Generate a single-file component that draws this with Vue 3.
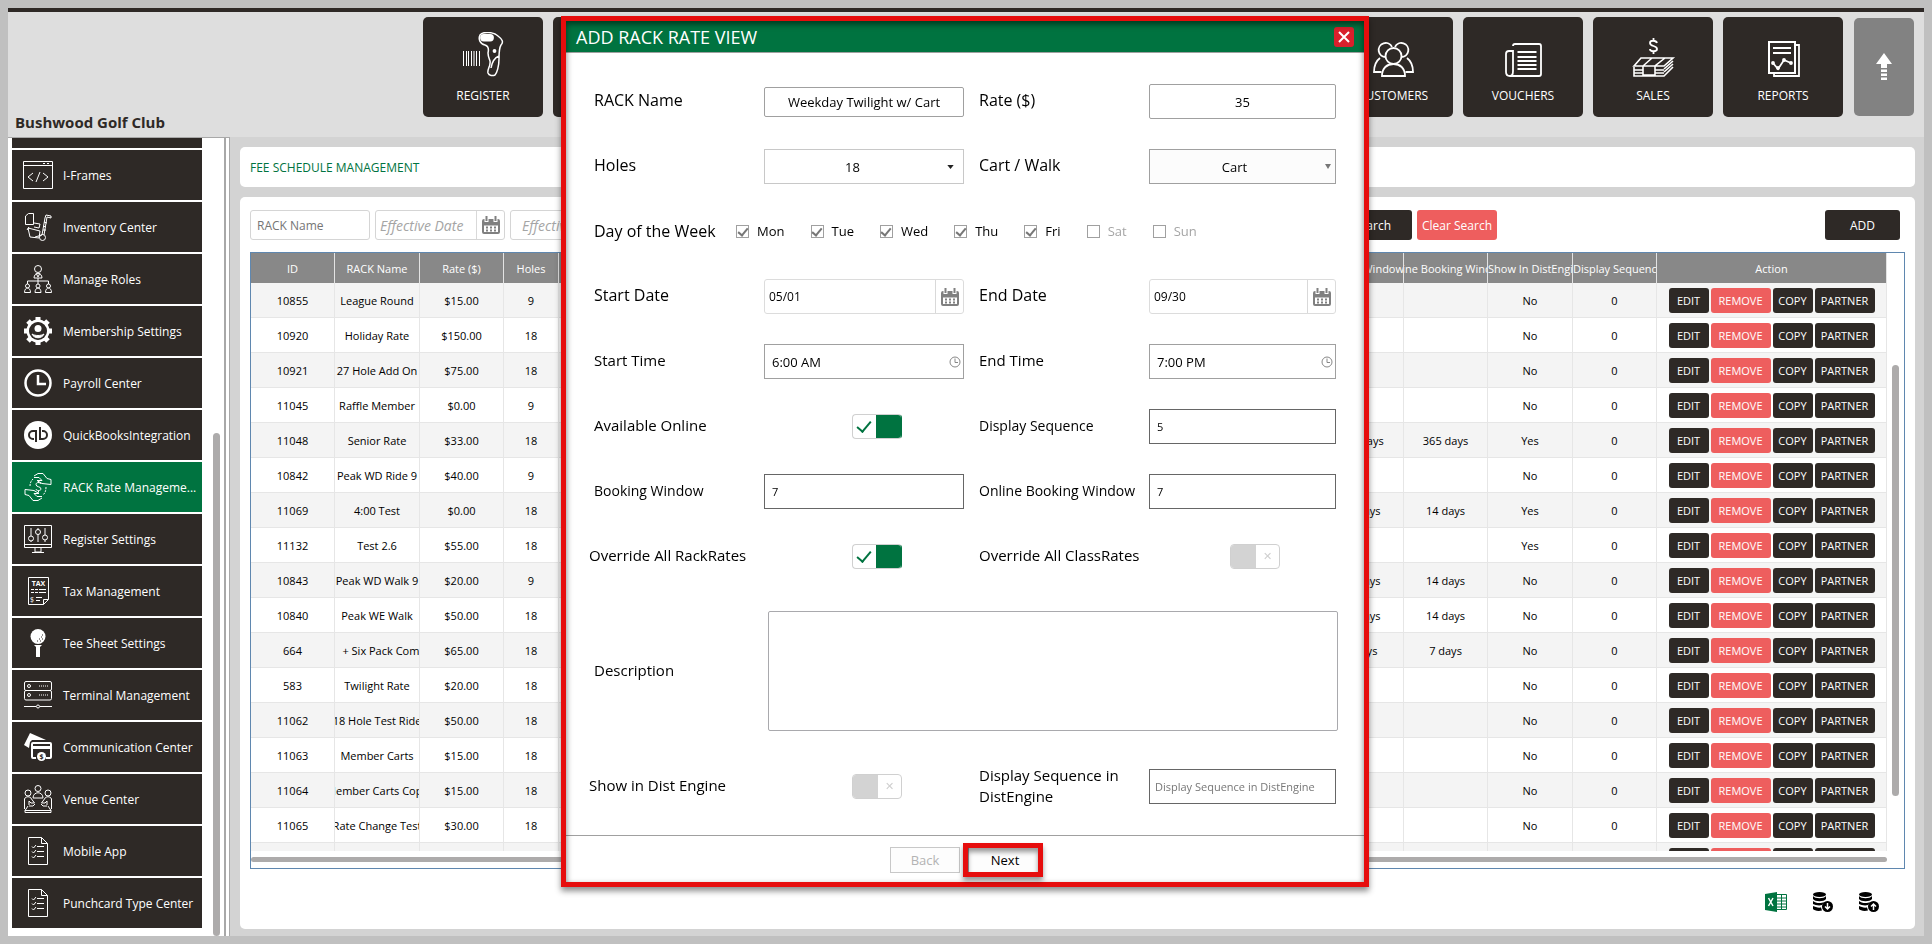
<template>
  <div class="page">
    <header class="header">
      <h1 class="club">Bushwood Golf Club</h1>
      <nav class="tiles">
        <a v-for="(tile, i) in tiles" :key="i" href="#" class="tile">
          <svg class="tile-icon" viewBox="0 0 45 45" v-html="tile.icon"></svg>
          <span>{{ tile.label }}</span>
        </a>
        <button class="tile-up" aria-label="Collapse menu">
          <svg viewBox="0 0 16 28" width="16" height="28" fill="#fff">
            <path d="M8 0L16 11H11V15H5V11H0zM5 16.500h6v2.500H5zM5 20.500h6v2.500H5zM5 24.500h6v2.500H5z" />
          </svg>
        </button>
      </nav>
    </header>

    <div class="body">
      <aside class="sidebar">
        <nav class="menu">
          <a
            v-for="item in menu"
            :key="item.label"
            href="#"
            class="menu-item"
            :class="{ active: item.active }"
          >
            <svg class="menu-icon" viewBox="0 0 28 28" v-html="item.icon"></svg>
            <span>{{ item.label }}</span>
          </a>
        </nav>
        <div class="menu-scroll"><div class="menu-thumb"></div></div>
      </aside>

      <main class="content">
        <section class="card card-title">FEE SCHEDULE MANAGEMENT</section>

        <section class="card card-main">
          <div class="filters">
            <input class="filter-input" type="text" placeholder="RACK Name" aria-label="RACK Name" />
            <div class="filter-date">
              <input type="text" placeholder="Effective Date" aria-label="Effective Date" />
              <button class="cal-btn" aria-label="Pick effective date">
                <svg viewBox="0 0 18 18" v-html="calendar"></svg>
              </button>
            </div>
            <div class="filter-date filter-until">
              <input type="text" placeholder="Effective Until" aria-label="Effective Until" />
            </div>
            <div class="spacer"></div>
            <button class="btn btn-search">Search</button>
            <button class="btn btn-red btn-clear">Clear Search</button>
            <button class="btn btn-add">ADD</button>
          </div>

          <div class="grid">
            <div class="grid-main">
              <div class="grid-view">
                <table>
                  <colgroup>
                    <col class="c-id" />
                    <col class="c-name" />
                    <col class="c-id" />
                    <col class="c-holes" />
                    <col />
                    <col class="c-window" />
                    <col class="c-online" />
                    <col class="c-show" />
                    <col class="c-seq" />
                    <col class="c-action" />
                  </colgroup>
                  <thead>
                    <tr>
                      <th>ID</th>
                      <th>RACK Name</th>
                      <th>Rate ($)</th>
                      <th>Holes</th>
                      <th></th>
                      <th><div class="clip">Booking Window</div></th>
                      <th><div class="clip">Online Booking Window</div></th>
                      <th class="start">Show In DistEngine</th>
                      <th class="start">Display Sequence</th>
                      <th>Action</th>
                    </tr>
                  </thead>
                  <tbody>
                    <tr v-for="row in rows" :key="row[0]">
                      <td>{{ row[0] }}</td>
                      <td><div class="clip">{{ row[1] }}</div></td>
                      <td>{{ row[2] }}</td>
                      <td>{{ row[3] }}</td>
                      <td></td>
                      <td>{{ row[4] }}</td>
                      <td>{{ row[4] }}</td>
                      <td>{{ row[5] }}</td>
                      <td>0</td>
                      <td>
                        <div class="actions">
                          <button class="act">EDIT</button>
                          <button class="act act-wide btn-red">REMOVE</button>
                          <button class="act">COPY</button>
                          <button class="act act-wide">PARTNER</button>
                        </div>
                      </td>
                    </tr>
                  </tbody>
                </table>
              </div>
              <div class="h-thumb"></div>
            </div>
            <div class="v-track"><div class="v-thumb"></div></div>
          </div>

          <div class="exports">
            <button aria-label="Export to Excel">
              <svg viewBox="0 0 22 20" width="22" height="20">
                <path d="M11 2.500h10.500v15H11z" fill="#fff" stroke="#007340" />
                <path d="M12 6h9M12 9h9M12 12h9M12 15h9M16.500 3v14" stroke="#007340" />
                <path d="M0 2L12 0V20L0 18z" fill="#007340" />
                <path d="M3.500 6l4.500 8M8 6l-4.500 8" stroke="#fff" stroke-width="1.500" />
              </svg>
            </button>
            <button aria-label="Download data">
              <svg viewBox="0 0 20 20" width="20" height="20">
                <g v-html="database"></g>
                <path d="M14.500 11v6M12 14.500l2.500 2.500 2.500-2.500" fill="none" stroke="#fff" stroke-width="1.500" />
              </svg>
            </button>
            <button aria-label="Upload data">
              <svg viewBox="0 0 20 20" width="20" height="20">
                <g v-html="database"></g>
                <path d="M14.500 18v-6M12 14.500l2.500-2.500 2.500 2.500" fill="none" stroke="#fff" stroke-width="1.500" />
              </svg>
            </button>
          </div>
        </section>
      </main>
    </div>

    <div v-if="visible" class="overlay">
      <div class="modal" role="dialog" aria-labelledby="modal-title">
        <div class="modal-head">
          <h2 id="modal-title">ADD RACK RATE VIEW</h2>
          <button class="modal-close" aria-label="Close" @click="visible = false">
            <svg viewBox="0 0 12 12" width="12" height="12">
              <path d="M1 1l10 10M11 1L1 11" stroke="#fff" stroke-width="2" />
            </svg>
          </button>
        </div>

        <form class="form" @submit.prevent>
          <label for="name">RACK Name</label>
          <input id="name" v-model="form.name" type="text" class="field field-short center" />
          <label for="rate" class="second">Rate ($)</label>
          <input id="rate" v-model="form.rate" type="text" class="field center rounded" />

          <label for="holes">Holes</label>
          <div class="select">
            <select id="holes" v-model="form.holes" class="field light">
              <option>9</option>
              <option>18</option>
            </select>
            <svg viewBox="0 0 8 5" width="7" height="4"><path d="M0 0h8L4 5z" fill="#222" /></svg>
          </div>
          <label for="cart" class="second">Cart / Walk</label>
          <div class="select select-cart">
            <select id="cart" v-model="form.cart" class="field">
              <option>Cart</option>
              <option>Walk</option>
            </select>
            <svg viewBox="0 0 6 5" width="6" height="5"><path d="M0 0h6L3 5z" fill="#777" /></svg>
          </div>

          <fieldset class="days">
            <legend class="sr-only">Day of the Week</legend>
            <span class="days-title">Day of the Week</span>
            <label v-for="day in form.days" :key="day.name" class="day" :class="{ off: !day.on }">
              <input v-model="day.on" type="checkbox" />{{ day.name }}
            </label>
          </fieldset>

          <label for="start-date">Start Date</label>
          <div class="date">
            <input id="start-date" v-model="form.startDate" type="text" />
            <button type="button" class="cal-btn" aria-label="Pick start date">
              <svg viewBox="0 0 18 18" v-html="calendar"></svg>
            </button>
          </div>
          <label for="end-date" class="second">End Date</label>
          <div class="date">
            <input id="end-date" v-model="form.endDate" type="text" />
            <button type="button" class="cal-btn" aria-label="Pick end date">
              <svg viewBox="0 0 18 18" v-html="calendar"></svg>
            </button>
          </div>

          <label for="start-time" class="medium">Start Time</label>
          <div class="select time">
            <input id="start-time" v-model="form.startTime" type="text" class="field" />
            <svg viewBox="0 0 12 12" width="12" height="12" v-html="clock"></svg>
          </div>
          <label for="end-time" class="second medium">End Time</label>
          <div class="select time">
            <input id="end-time" v-model="form.endTime" type="text" class="field" />
            <svg viewBox="0 0 12 12" width="12" height="12" v-html="clock"></svg>
          </div>

          <label for="online" class="medium">Available Online</label>
          <input id="online" v-model="form.online" type="checkbox" class="toggle" />
          <label for="sequence" class="second small">Display Sequence</label>
          <input id="sequence" v-model="form.sequence" type="text" class="field dark" />

          <label for="booking" class="small">Booking Window</label>
          <input id="booking" v-model="form.booking" type="text" class="field dark" />
          <label for="online-booking" class="second small">Online Booking Window</label>
          <input id="online-booking" v-model="form.onlineBooking" type="text" class="field dark" />

          <label for="override-rack" class="medium outdent">Override All RackRates</label>
          <input id="override-rack" v-model="form.overrideRack" type="checkbox" class="toggle" />
          <label for="override-class" class="second medium">Override All ClassRates</label>
          <input id="override-class" v-model="form.overrideClass" type="checkbox" class="toggle" />

          <label for="description" class="medium">Description</label>
          <textarea id="description" v-model="form.description"></textarea>

          <label for="show-dist" class="medium outdent">Show in Dist Engine</label>
          <input id="show-dist" v-model="form.showDist" type="checkbox" class="toggle" />
          <label for="dist-sequence" class="second medium">Display Sequence in DistEngine</label>
          <input
            id="dist-sequence"
            v-model="form.distSequence"
            type="text"
            class="field dark"
            placeholder="Display Sequence in DistEngine"
          />
        </form>

        <div class="modal-foot">
          <button class="step" disabled>Back</button>
          <div class="highlight"><button class="step">Next</button></div>
        </div>
      </div>
    </div>
  </div>
</template>

<script setup>
import { ref } from 'vue';

const visible = ref(true);

const form = ref({
  name: 'Weekday Twilight w/ Cart',
  rate: '35',
  holes: '18',
  cart: 'Cart',
  days: [
    { name: 'Mon', on: true },
    { name: 'Tue', on: true },
    { name: 'Wed', on: true },
    { name: 'Thu', on: true },
    { name: 'Fri', on: true },
    { name: 'Sat', on: false },
    { name: 'Sun', on: false }
  ],
  startDate: '05/01',
  endDate: '09/30',
  startTime: '6:00 AM',
  endTime: '7:00 PM',
  online: true,
  sequence: '5',
  booking: '7',
  onlineBooking: '7',
  overrideRack: true,
  overrideClass: false,
  description: '',
  showDist: false,
  distSequence: ''
});

const blank = { label: '', icon: '' };

const tiles = [
  {
    label: 'REGISTER',
    icon: '<path d="M2.500 19v15M5.500 19v15M7.500 19v15M10.500 19v15M13 19v15M15.500 19v15M18.500 19v15" stroke-width="1"/><path d="M19 3C22-1 33 0 37 4c4 3 6 6 3 9-2 3-2 8-2 14 0 7-2 14-4 16-2 1-6 1-7-2-1-4 3-7 2-12-1-3-2-5-2-8 1-4 0-7-3-8-5-1-7-6-5-10zM38 24c-5 2-7 6-8 12" stroke-width="1.500"/><rect x="20" y="3" width="12" height="5.500" rx="2.700" fill="#fff"/><circle cx="33.500" cy="19" r="1" fill="#fff"/>'
  },
  blank, blank, blank, blank, blank, blank,
  {
    label: 'CUSTOMERS',
    icon: '<circle cx="22.500" cy="24" r="8"/><path d="M11 44c0-8 5-12 11.500-12S34 36 34 44z"/><path d="M15 25a7 7 0 1 1 6-10M30 25a7 7 0 1 0-6-10M10.500 40H3c0-7 2-11 6-14M34.500 40H42c0-7-2-11-6-14"/>'
  },
  {
    label: 'VOUCHERS',
    icon: '<path d="M12 14a2 2 0 0 1 2-2h24a2 2 0 0 1 2 2v28a2 2 0 0 1-2 2H9c-3 0-4-2-4-4V22c0-2 1-3 3-3h4v20c0 3-1 5-3 5M16.500 20h19M16.500 25h19M16.500 29h19M16.500 33h19M16.500 37h19"/>'
  },
  {
    label: 'SALES',
    icon: '<path d="M26 11c-1-3-7-3-7 0 0 4 7 2 7 6 0 3-7 3-7 0M22.500 6v3M22.500 19v3"/><path d="M10 26h32l-9 8H3zM3 35v9h30l9-9M3 38h9M3 41h9M12 34v9h12v-9l10-8M12 34l9-8M33 37l9-8M33 40l9-8M24 38h9M24 41h9" stroke-width="1.600"/>'
  },
  {
    label: 'REPORTS',
    icon: '<path d="M8 10h26v31H8z" stroke-width="2"/><path d="M35 13h3v31H13v-3M12 16h18M12 21h18M12 31l5 6 6-9 7 3"/><circle cx="12" cy="31" r="1"/><circle cx="17" cy="36" r="1"/><circle cx="23" cy="28" r="1"/><circle cx="30" cy="31" r="1"/>'
  }
];

const checklist =
  '<path d="M4.500 .500h13l6 6v21h-19zM17.500 .500v6h6M13 9.500h7M13 14.500h7M13 19.500h7M8 9.500l1.500 1.500 2.500-3M8 14.500l1.500 1.500 2.500-3M8 19.500l1.500 1.500 2.500-3"/>';

const menu = [
  { label: '', icon: '' },
  {
    label: 'I-Frames',
    icon: '<path d="M-.500 .500h29v27H-.500zM-.500 4.500h29M19 2.500h2M23 2.500h2"/><path d="M9 12l-5 4 5 4M19 12l5 4-5 4M16 11l-4 10"/>'
  },
  {
    label: 'Inventory Center',
    icon: '<path d="M1.500 3l3-2.500h5v11h-8zM10 10l6 1-1 4-5-1M27 3l-5-1-1 3-3 17M27 3v2l-4-1-3 18M4 15l12 3-1 7-9-1zM3 17l2-3M18 22l-7 2"/><circle cx="18.500" cy="24.500" r="3"/><path d="M20 9l3 1M19 13l3 1M19 17h3"/>'
  },
  {
    label: 'Manage Roles',
    icon: '<circle cx="14" cy="4" r="3.500"/><path d="M10 13c0-6 8-6 8 0zM12 8l2 4 2-4M14 13v6M3.500 19v-3h21v3"/><circle cx="3.500" cy="21" r="2"/><circle cx="14" cy="21" r="2"/><circle cx="24.500" cy="21" r="2"/><path d="M.500 27.500c0-6 6-6 6 0zM11 27.500c0-6 6-6 6 0zM21.500 27.500c0-6 6-6 6 0z"/>'
  },
  {
    label: 'Membership Settings',
    icon: '<circle cx="14" cy="14" r="10" stroke-width="3"/><path d="M14 0v5M14 23v5M0 14h5M23 14h5M4 4l4 4M20 20l4 4M4 24l4-4M20 8l4-4" stroke-width="5"/><circle cx="14" cy="14" r="9" fill="#2e2926" stroke="none"/><circle cx="14" cy="11.500" r="3.500" fill="#fff" stroke="none"/><path d="M8 17c2 5 10 5 12 0-3 2-9 2-12 0z" fill="#fff"/>'
  },
  { label: 'Payroll Center', icon: '<circle cx="14" cy="14" r="12.500" stroke-width="2.500"/><path d="M14 6v9h8" stroke-width="2.500"/>' },
  {
    label: 'QuickBooksIntegration',
    icon: '<circle cx="14" cy="14" r="14" fill="#fff" stroke="none"/><g stroke="#2e2926" stroke-width="2"><path d="M12 21V10H9a4 4 0 0 0 0 8h1M16 6v12h3a4 4 0 0 0 0-8h-1"/></g>'
  },
  {
    label: 'RACK Rate Manageme...',
    active: true,
    icon: '<path d="M10 3l4-2.500h5l4 5 4 1v5l-9-1-5-3h5l-3-3h-5M18 25l-4 2.500H9l-4-5-4-1v-5l9 1 5 3h-5l3 3h5"/><path d="M6 13c0-3 1-5 3-7M22 14c0 4-1 6-3 8" stroke-dasharray="2 1"/><path d="M17 11c-1-2-5-2-5 .500 0 3 5 1.500 5 4.500 0 2-5 2-5 0M14.500 8v2M14.500 17.500v2"/>'
  },
  {
    label: 'Register Settings',
    icon: '<path d="M.500 .500h27v22H.500zM.500 19.500h27M11 23v4h6v-4M8 27.500h12M7 3v8M7 16v1M14 3v2M14 9v8M21 3v7M21 15v2"/><circle cx="7" cy="13.500" r="2.500"/><circle cx="14" cy="7" r="2.500"/><circle cx="21" cy="12.500" r="2.500"/>'
  },
  {
    label: 'Tax Management',
    icon: '<path d="M4.500 .500h20v22l-5 5h-15zM19.500 27.500v-5h5"/><text x="14.500" y="9" text-anchor="middle" font-size="7" font-weight="700" fill="#fff" stroke="none">TAX</text><path d="M7 12.500h3M11 12.500h3M15 12.500h7M7 15.500h3M11 15.500h3M15 15.500h7M12 20.500h6M12 23.500h4"/><text x="6" y="25" font-size="7" fill="#fff" stroke="none">$</text>'
  },
  {
    label: 'Tee Sheet Settings',
    icon: '<circle cx="14" cy="7.500" r="7.500" fill="#fff" stroke="none"/><path d="M10 16h8l-2 2v10h-4V18z" fill="#fff" stroke="none"/><path d="M13 12h1M16 12h1M15 10h1M18 10h1M17 8h1M18 6h1" stroke="#2e2926"/>'
  },
  {
    label: 'Terminal Management',
    icon: '<rect x=".500" y=".500" width="27" height="9" rx="1.500"/><rect x=".500" y="9.500" width="27" height="9.500" rx="1.500"/><circle cx="5" cy="5" r="1.500"/><circle cx="5" cy="14" r="1.500"/><path d="M15 5h10M15 14h10" stroke-dasharray="1 1"/><path d="M0 25.500h12M16 25.500h12"/><circle cx="14" cy="25.500" r="1.500"/>'
  },
  {
    label: 'Communication Center',
    icon: '<path d="M6 0l16 7H8L6 9 5 15 0 12z" fill="#fff" stroke="none"/><path d="M7 11a2 2 0 0 1 2-2h17a2 2 0 0 1 2 2v13a2 2 0 0 1-2 2h-4v-2h4v-8H9v8h3v2H9a2 2 0 0 1-2-2zM9 11v2h17v-2z" fill="#fff" fill-rule="evenodd" stroke="none"/><circle cx="17.500" cy="23.500" r="4.500" fill="#fff" stroke="none"/><text x="17.500" y="26" text-anchor="middle" font-size="7" font-weight="700" fill="#2e2926" stroke="none">$</text>'
  },
  {
    label: 'Venue Center',
    icon: '<circle cx="14" cy="3.500" r="3"/><circle cx="4" cy="8" r="3"/><circle cx="24" cy="8" r="3"/><path d="M9 13c0-7 10-7 10 0zM.500 24V14c1-3 6-3 7 0l3 4H7l-2-2v4M27.500 24V14c-1-3-6-3-7 0l-3 4H21l2-2v4M5 21h4l2-2M23 21h-4l-2-2M4 21L1 25.500h26L24 21M1 25.500v2h26v-2"/>'
  },
  { label: 'Mobile App', icon: checklist },
  { label: 'Punchcard Type Center', icon: checklist }
];

const calendar =
  '<path d="M0 5a2 2 0 0 1 2-2h.500v3h4V3h5v3h4V3h.500a2 2 0 0 1 2 2v11a2 2 0 0 1-2 2H2a2 2 0 0 1-2-2zM2 9.500v6.500h14V9.500z" fill-rule="evenodd"/><path d="M3.500 0h2v5h-2zM12.500 0h2v5h-2zM4 10.500h2v2H4zM8 10.500h2v2H8zM12 10.500h2v2h-2zM4 13.500h2v2H4zM8 13.500h2v2H8zM12 13.500h2v2h-2z"/>';

const clock =
  '<circle cx="6" cy="6" r="5" fill="none" stroke="#888"/><path d="M6 2.500V6.500h3" fill="none" stroke="#888"/>';

const database =
  '<ellipse cx="6.500" cy="2.500" rx="6.500" ry="2.500"/><path d="M0 4c2 3 11 3 13 0v3c-2 3-11 3-13 0zM0 9c2 2 8 3 11 1l-2 3c-3 1-7 0-9-1zM0 14c2 1 5 2 8 1.500l1 3c-4 1-8 0-9-1.500z"/><circle cx="14.500" cy="14.500" r="5.500"/>';

// id, name, rate, holes, booking window, in dist engine
const rows = [
  ['10855', 'League Round', '$15.00', 9, '', 'No'],
  ['10920', 'Holiday Rate', '$150.00', 18, '', 'No'],
  ['10921', '27 Hole Add On', '$75.00', 18, '', 'No'],
  ['11045', 'Raffle Member', '$0.00', 9, '', 'No'],
  ['11048', 'Senior Rate', '$33.00', 18, '365 days', 'Yes'],
  ['10842', 'Peak WD Ride 9', '$40.00', 9, '', 'No'],
  ['11069', '4:00 Test', '$0.00', 18, '14 days', 'Yes'],
  ['11132', 'Test 2.6', '$55.00', 18, '', 'Yes'],
  ['10843', 'Peak WD Walk 9', '$20.00', 9, '14 days', 'No'],
  ['10840', 'Peak WE Walk', '$50.00', 18, '14 days', 'No'],
  ['664', '18   + Six Pack Combo', '$65.00', 18, '7 days', 'No'],
  ['583', 'Twilight Rate', '$20.00', 18, '', 'No'],
  ['11062', '18 Hole Test Ride', '$50.00', 18, '', 'No'],
  ['11063', 'Member Carts', '$15.00', 18, '', 'No'],
  ['11064', 'Member Carts Copy', '$15.00', 18, '', 'No'],
  ['11065', 'Rate Change Test', '$30.00', 18, '', 'No'],
  ['', '', '', '', '', '']
];
</script>

<style>
body {
  background: #c0c0c0;
  font-family: "Open Sans", "Noto Sans", sans-serif;
}
</style>

<style scoped>
* {
  box-sizing: border-box;
}

button,
input,
select,
textarea {
  font-family: inherit;
  margin: 0;
}

.page {
  height: 100vh;
  padding: 8px;
  display: flex;
  flex-direction: column;
}

.header {
  flex: none;
  height: 129px;
  background: #dedede;
  border-top: 4px solid #2e2926;
  padding: 5px 10px 0 7px;
  display: flex;
  justify-content: space-between;
}

.club {
  align-self: flex-end;
  margin: 0 0 5px;
  font-size: 15px;
  line-height: 20px;
  font-weight: 700;
  color: #2e2926;
  white-space: nowrap;
}

.tiles {
  display: flex;
  gap: 10px;
}

.tile {
  width: 120px;
  height: 100px;
  background: #2e2926;
  border-radius: 5px;
  color: #fff;
  font-size: 12px;
  line-height: 16px;
  text-decoration: none;
  display: flex;
  flex-direction: column;
  align-items: center;
  padding-top: 15px;
  gap: 11px;
}

.tile-icon {
  width: 45px;
  height: 45px;
  fill: none;
  stroke: #fff;
  stroke-width: 1.800;
}

.tile-up {
  width: 60px;
  height: 98px;
  margin: 1px 0 0 1px;
  border: none;
  border-radius: 5px;
  background: #828282;
  display: flex;
  align-items: center;
  justify-content: center;
}

.body {
  flex: 1;
  min-height: 0;
  display: flex;
}

.sidebar {
  width: 222px;
  flex: none;
  background: #fff;
  border-top: 1px solid #a8a8a8;
  border-right: 1px solid #a8a8a8;
  padding: 0 3px 0 4px;
  display: flex;
}

.menu {
  width: 190px;
  overflow: hidden;
  display: flex;
  flex-direction: column;
  justify-content: flex-end;
  gap: 2px;
  padding-bottom: 8px;
}

.menu-item {
  flex: none;
  height: 50px;
  background: #2e2926;
  color: #fff;
  font-size: 12px;
  text-decoration: none;
  white-space: nowrap;
  display: flex;
  align-items: center;
  gap: 11px;
  padding-left: 12px;
}

.menu-item.active {
  background: #007340;
}

.menu-icon {
  width: 28px;
  height: 28px;
  fill: none;
  stroke: #fff;
  flex: none;
  overflow: visible;
}

.menu-scroll {
  flex: 1;
  border-right: 2px solid #a8a8a8;
  display: flex;
  justify-content: flex-end;
  align-items: flex-end;
  padding-right: 4px;
}

.menu-thumb {
  width: 7px;
  height: 63%;
  background: #adabab;
  border-radius: 4px;
}

.content {
  flex: 1;
  min-width: 0;
  background: #d3d3d3;
  padding: 10px 9px 7px 10px;
  display: flex;
  flex-direction: column;
  gap: 10px;
}

.card {
  background: #fff;
  border-radius: 5px;
}

.card-title {
  height: 40px;
  padding-left: 10px;
  color: #007340;
  font-size: 12px;
  line-height: 42px;
}

.card-main {
  flex: 1;
  min-height: 0;
  padding: 13px 10px 0;
  display: flex;
  flex-direction: column;
}

.filters {
  display: flex;
  gap: 5px;
  padding-right: 5px;
}

.filter-input {
  width: 120px;
  height: 30px;
  border: 1px solid #d5d5d5;
  border-radius: 3px;
  padding: 0 6px;
  font-size: 12px;
}

.filter-date {
  width: 130px;
  height: 30px;
  border: 1px solid #d5d5d5;
  border-radius: 3px;
  display: flex;
}

.filter-date input {
  flex: 1;
  min-width: 0;
  border: none;
  background: none;
  padding: 0 4px;
  font-size: 14px;
  font-style: italic;
}

.filter-date input::placeholder {
  color: #a5a5a5;
}

.filter-until input {
  padding-left: 11px;
}

.cal-btn {
  width: 28px;
  border: none;
  border-left: 1px solid #d9d9d9;
  background: none;
  padding: 0;
  display: flex;
  align-items: center;
  justify-content: center;
}

.cal-btn svg {
  width: 18px;
  height: 18px;
  fill: #808080;
}

.spacer {
  flex: 1;
}

.btn {
  height: 30px;
  border: none;
  border-radius: 3px;
  background: #2e2926;
  color: #fff;
  font-size: 12px;
  padding: 0;
}

.btn-search {
  width: 80px;
}

.btn-clear {
  width: 80px;
  margin-right: 323px;
}

.btn-add {
  width: 75px;
}

.btn-red {
  background: #ee5e5e;
}

.grid {
  flex: 1;
  min-height: 0;
  margin-top: 12px;
  border: 1px solid #5f87af;
  display: flex;
}

.grid-main {
  flex: 1;
  min-width: 0;
  display: flex;
  flex-direction: column;
}

.grid-view {
  flex: 1;
  min-height: 0;
  overflow: hidden;
}

.h-thumb {
  height: 5px;
  margin: 6px 0;
  border-radius: 3px;
  background: #adabab;
}

.v-track {
  width: 17px;
  padding: 112px 5px 72px;
  display: flex;
}

.v-thumb {
  flex: 1;
  border-radius: 4px;
  background: #adabab;
}

table {
  width: 100%;
  table-layout: fixed;
  border-collapse: separate;
  border-spacing: 0;
  font-size: 11px;
  text-align: center;
}

.c-id { width: 84px; }
.c-name { width: 85px; }
.c-holes { width: 55px; }
.c-window { width: 85px; }
.c-online { width: 84px; }
.c-show { width: 85px; }
.c-seq { width: 84px; }
.c-action { width: 230px; }

th {
  height: 30px;
  padding: 0;
  background: #888;
  color: #fff;
  font-weight: 400;
  border-right: 1px solid #e3e3e3;
  white-space: nowrap;
  overflow: hidden;
}

th.start {
  text-align: left;
}

td {
  height: 35px;
  padding: 0;
  border-right: 1px solid #e6e6e6;
  border-bottom: 1px solid #e6e6e6;
}

tbody tr:nth-child(odd) td {
  background: #f4f4f4;
}

.clip {
  display: flex;
  justify-content: center;
  overflow: hidden;
  white-space: pre;
}

.actions {
  display: flex;
  justify-content: center;
  gap: 2px;
}

.act {
  width: 40px;
  height: 25px;
  padding: 0;
  border: none;
  border-radius: 3px;
  background: #2e2926;
  color: #fff;
  font-size: 11px;
}

.act-wide {
  width: 60px;
}

.act.btn-red {
  background: #ee5e5e;
}

.exports {
  height: 60px;
  display: flex;
  justify-content: flex-end;
  align-items: center;
  gap: 26px;
  padding: 6px 26px 0 0;
}

.exports button {
  border: none;
  background: none;
  padding: 0;
  display: flex;
}

.overlay {
  position: fixed;
  inset: 0;
  display: flex;
  justify-content: center;
  align-items: flex-start;
  padding: 16px 2px 0 0;
}

.modal {
  position: relative;
  width: 808px;
  border: 5px solid #e60d0d;
  background: #fff;
  box-shadow: 0 4px 6px rgba(0, 0, 0, 0.45);
}

/* the frame throws its shadow inwards as well */
.modal::after {
  content: "";
  position: absolute;
  inset: 0;
  pointer-events: none;
  box-shadow: inset 0 3px 6px rgba(0, 0, 0, 0.55);
}

.modal-head {
  height: 32px;
  background: #007340;
  border-bottom: 1px solid #a0a0a0;
  padding: 0 10px;
  display: flex;
  align-items: center;
  justify-content: space-between;
}

.modal-head h2 {
  margin: 0;
  color: #fff;
  font-size: 18px;
  line-height: 24px;
  font-weight: 400;
}

.modal-close {
  width: 20px;
  height: 20px;
  border: none;
  border-radius: 3px;
  background: #d9202c;
  padding: 4px;
  display: flex;
}

.form {
  display: grid;
  grid-template-columns: 170px 200px 185px minmax(0, 1fr);
  grid-template-rows: repeat(8, 65px) 165px 65px;
  align-items: center;
  padding: 16px 28px;
  font-size: 16px;
  line-height: 21px;
  color: #000;
}

.form > label {
  padding-bottom: 2px;
}

.second {
  padding-left: 15px;
}

.medium {
  font-size: 15px;
}

.small {
  font-size: 14px;
}

.outdent {
  margin-left: -5px;
}

.field {
  width: 100%;
  height: 35px;
  border: 1px solid #a0a0a0;
  background: #fff;
  padding: 0 7px;
  font-size: 13px;
  color: #000;
}

.field-short {
  height: 30px;
  border-radius: 2px;
}

.rounded {
  border-radius: 2px;
}

.center {
  text-align: center;
}

.light {
  border-color: #c8c8c8;
}

.dark {
  border-color: #666;
  font-size: 11px;
}

.dark::placeholder {
  color: #777;
}

#dist-sequence {
  padding: 0 5px;
}

.select {
  display: flex;
  align-items: center;
}

.select select {
  appearance: none;
  text-align: center;
  text-align-last: center;
  padding-right: 30px;
  border-radius: 0;
}

.select svg {
  flex: none;
  margin-left: -17px;
  margin-right: 10px;
  pointer-events: none;
}

.select-cart select {
  background: #fcfcfc;
  padding-right: 23px;
}

.select-cart svg {
  margin-left: -11px;
  margin-right: 5px;
}

.time svg {
  margin-left: -15px;
  margin-right: 3px;
}

.days {
  grid-column: 1 / -1;
  border: none;
  margin: 0;
  padding: 0;
  display: flex;
  align-items: center;
  gap: 26px;
}

.days-title {
  width: 116px;
  white-space: nowrap;
}

.sr-only {
  position: absolute;
  width: 1px;
  height: 1px;
  overflow: hidden;
  clip-path: inset(50%);
}

.day {
  display: flex;
  align-items: center;
  gap: 8px;
  font-size: 13px;
}

.day.off {
  color: #a5a5a5;
}

.day input {
  appearance: none;
  width: 13px;
  height: 13px;
  border: 1px solid #a0a0a0;
  display: flex;
  justify-content: center;
}

.day input:checked::before {
  content: "";
  width: 4px;
  height: 8px;
  border: solid #777;
  border-width: 0 2px 2px 0;
  transform: rotate(40deg);
}

.date {
  height: 35px;
  border: 1px solid #dcdcdc;
  border-radius: 3px;
  display: flex;
}

.date input {
  flex: 1;
  min-width: 0;
  border: none;
  background: none;
  padding: 0 4px;
  font-size: 12px;
  color: #000;
}

.toggle {
  appearance: none;
  width: 50px;
  height: 25px;
  margin-left: 88px;
  border: 1px solid #d0d0d0;
  border-radius: 4px;
  overflow: hidden;
  display: flex;
  align-items: center;
}

.second + .toggle {
  margin-left: 81px;
}

.toggle::before {
  content: "";
  flex: none;
  width: 25px;
  height: 25px;
  background: #d3d3d3;
}

.toggle::after {
  content: "✕";
  flex: 1;
  text-align: center;
  font-family: "DejaVu Sans", sans-serif;
  font-size: 11px;
  color: #cfcfcf;
}

.toggle:checked {
  flex-direction: row-reverse;
  border-right-color: #007340;
}

.toggle:checked::before {
  background: #007340;
}

.toggle:checked::after {
  content: "";
  flex: none;
  width: 6px;
  height: 12px;
  margin: 0 8px 4px 0;
  border: solid #007340;
  border-width: 0 2px 2px 0;
  transform: rotate(40deg);
}

textarea {
  grid-column: 2 / -1;
  align-self: start;
  height: 120px;
  margin: 22px -2px 0 4px;
  border: 1px solid #a9a9ad;
  border-radius: 2px;
  resize: none;
  font-size: 13px;
}

.modal-foot {
  height: 47px;
  border-top: 1px solid #a0a0a0;
  padding: 2px 0 0 3px;
  display: flex;
  justify-content: center;
  align-items: center;
  gap: 3px;
}

.step {
  width: 70px;
  height: 26px;
  border: 1px solid #9a9a9a;
  background: #fdfdfd;
  font-size: 13px;
  line-height: 16px;
  color: #000;
  padding: 0;
}

.step:disabled {
  border-color: #c8c8c8;
  color: #b3b3b3;
}

.highlight {
  position: relative;
  width: 80px;
  height: 34px;
  border: 5px solid #e60d0d;
  box-shadow: 0 4px 5px rgba(0, 0, 0, 0.4);
  display: flex;
}

.highlight::after {
  content: "";
  position: absolute;
  inset: 0;
  pointer-events: none;
  box-shadow: inset 0 4px 5px rgba(0, 0, 0, 0.4);
}

.highlight .step {
  height: 100%;
  padding-left: 3px;
  border-width: 0 0 0 1px;
}
</style>
